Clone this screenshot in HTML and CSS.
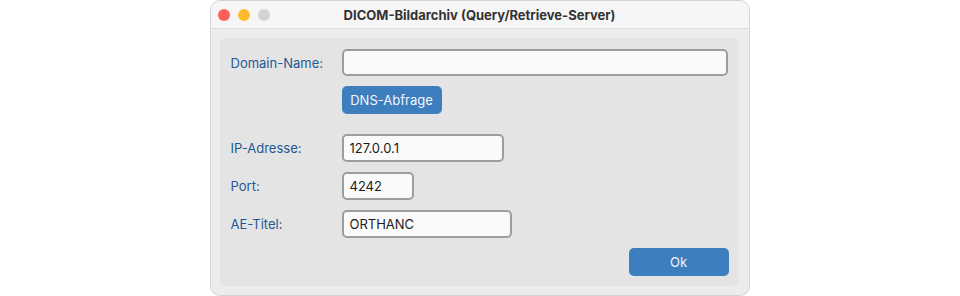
FILE: index.html
```html
<!DOCTYPE html>
<html lang="de">
<head>
    <meta charset="UTF-8">
    <meta name="viewport" content="width=device-width, initial-scale=1.0">
    <title>DICOM-Bildarchiv</title>
    <link rel="stylesheet" href="styles.css">
</head>
<body>
    <div class="window">
        <div class="titlebar">
            <div class="titlebar__lights">
                <span class="light light--close"></span>
                <span class="light light--min"></span>
                <span class="light light--max"></span>
            </div>
            <div class="titlebar__title">DICOM-Bildarchiv (Query/Retrieve-Server)</div>
        </div>
        <div class="window__body">
            <div class="panel">
                <label class="panel__label" for="domain">Domain-Name:</label>
                <input class="field field--domain" id="domain" type="text" value="">

                <span></span>
                <button class="btn btn--dns">DNS-Abfrage</button>

                <label class="panel__label panel__label--gap" for="ip">IP-Adresse:</label>
                <input class="field field--ip field--gap" id="ip" type="text" value="127.0.0.1">

                <label class="panel__label" for="port">Port:</label>
                <input class="field field--port" id="port" type="text" value="4242">

                <label class="panel__label" for="aet">AE-Titel:</label>
                <input class="field field--aet" id="aet" type="text" value="ORTHANC">

                <button class="btn btn--ok">Ok</button>
            </div>
        </div>
    </div>
</body>
</html>
```

FILE: styles.css
```css
:root {
    --labelColor: #1f5893;
    --buttonColor: #3d7ebf;
    --fieldBorder: #9a9da2;
}
html,
body {
    height: 100%;
}
body {
    margin: 0;
    background-color: #fff;
    font-family: Inter, "Liberation Sans", sans-serif;
    font-size: 13px;
    display: flex;
    justify-content: center;
}

.window {
    box-sizing: border-box;
    width: 540px;
    height: 296px;
    margin-left: -1px;
    border: 1px solid #d3d3d3;
    border-radius: 10px;
    background-color: #ececec;
    overflow: hidden;
    display: flex;
    flex-direction: column;
}

.titlebar {
    position: relative;
    height: 27px;
    flex: none;
    background-color: #f6f6f6;
    border-bottom: 1px solid #dcdcdc;
    display: flex;
    align-items: center;
    justify-content: center;
}

.titlebar__lights {
    position: absolute;
    left: 7px;
    top: 8px;
    display: flex;
    gap: 8px;
}

.light {
    width: 12px;
    height: 12px;
    border-radius: 50%;
}
.light--close { background-color: #fe5f57; }
.light--min { background-color: #febc2e; }
.light--max { background-color: #d3d3d3; }

.titlebar__title {
    font-weight: 700;
    color: #333;
    margin-top: 1px;
}

.window__body {
    flex: 1;
    padding: 9px 10px 9px 9px;
}

.panel {
    box-sizing: border-box;
    height: 100%;
    padding: 11px 10px 9px 11px;
    border-radius: 5px;
    background-color: #e4e4e4;
    display: grid;
    grid-template-columns: 111px 1fr;
    grid-template-rows: 27px 28px 38px 28px 28px 28px;
    row-gap: 10px;
    align-items: center;
    align-content: start;
}

.panel__label {
    color: var(--labelColor);
    line-height: 28px;
}
.panel__label--gap,
.field--gap {
    align-self: end;
}

.field {
    box-sizing: border-box;
    height: 28px;
    padding: 0 6px;
    border: 2px solid var(--fieldBorder);
    border-radius: 5px;
    background-color: #fafafa;
    font-family: inherit;
    font-size: 13px;
    color: #1c1c1c;
    outline: none;
}
.field--domain { width: 386px; height: 27px; }
.field--ip { width: 162px; }
.field--port { width: 72px; }
.field--aet { width: 170px; }

.btn {
    box-sizing: border-box;
    height: 28px;
    border: none;
    border-radius: 5px;
    background-color: var(--buttonColor);
    color: #f2f6fb;
    font-family: inherit;
    font-size: 13px;
    padding: 0;
}
.btn--dns { width: 100px; }
.btn--ok {
    grid-column: 1 / -1;
    justify-self: end;
    width: 100px;
}
```
